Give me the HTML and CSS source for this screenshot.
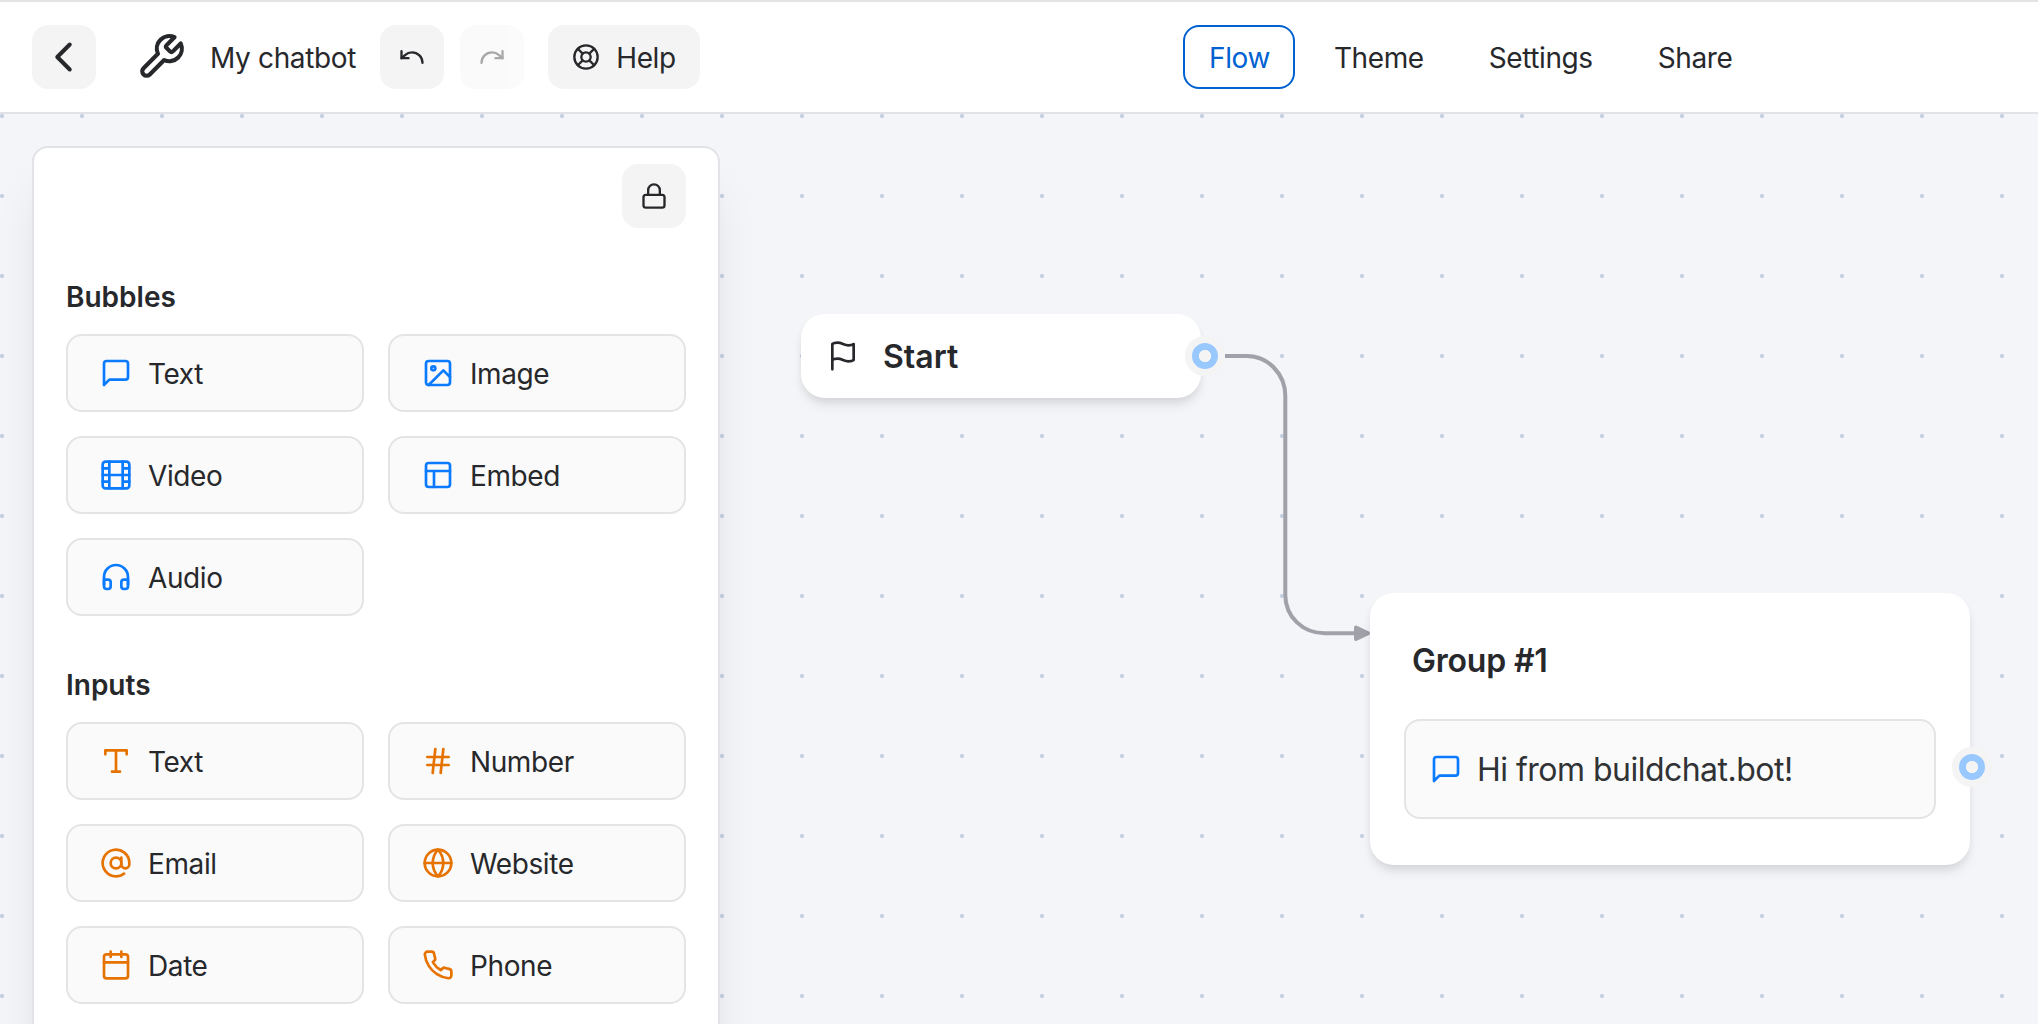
FILE: index.html
```html
<!DOCTYPE html>
<html lang="en">
<head>
<meta charset="utf-8">
<title>My chatbot</title>
<link rel="stylesheet" href="styles.css">
</head>
<body>
<div class="editor">
  <header class="topbar">
    <div class="topbar-left">
      <button class="btn btn-square" aria-label="Back"><svg class="icon icon-back" viewBox="0 0 24 24"><path d="M15 18.500l-6.500-6.500 6.500-6.500"/></svg></button>
      <div class="title">
        <svg class="icon icon-wrench" viewBox="0 0 24 24"><path d="M14.7 6.3a1 1 0 0 0 0 1.4l1.6 1.6a1 1 0 0 0 1.4 0l3.77-3.77a6 6 0 0 1-7.94 7.94l-6.91 6.91a2.12 2.12 0 0 1-3-3l6.91-6.91a6 6 0 0 1 7.94-7.94l-3.76 3.76z"/></svg>
        <span class="title-text">My chatbot</span>
      </div>
      <div class="history">
        <button class="btn btn-square" aria-label="Undo"><svg class="icon icon-sm" viewBox="0 0 24 24"><path d="M3 7v6h6"/><path d="M21 17a9 9 0 0 0-9-9 9 9 0 0 0-6 2.3L3 13"/></svg></button>
        <button class="btn btn-square btn-disabled" aria-label="Redo"><svg class="icon icon-sm" viewBox="0 0 24 24"><path d="M21 7v6h-6"/><path d="M3 17a9 9 0 0 1 9-9 9 9 0 0 1 6 2.3l3 2.7"/></svg></button>
      </div>
      <button class="btn btn-help"><svg class="icon icon-sm" viewBox="0 0 24 24"><circle cx="12" cy="12" r="10"/><circle cx="12" cy="12" r="4"/><path d="M4.93 4.93l4.24 4.24M14.83 14.83l4.24 4.24M14.83 9.17l4.24-4.24M4.93 19.07l4.24-4.24"/></svg><span class="label">Help</span></button>
    </div>
    <nav class="tabs">
      <a class="tab tab-active">Flow</a>
      <a class="tab">Theme</a>
      <a class="tab">Settings</a>
      <a class="tab">Share</a>
    </nav>
  </header>
  <main class="canvas">
    <aside class="panel">
      <div class="panel-top">
        <button class="btn btn-square" aria-label="Lock"><svg class="icon icon-sm" viewBox="0 0 24 24"><rect x="3" y="11" width="18" height="11" rx="2"/><path d="M7 11V7a5 5 0 0 1 10 0v4"/></svg></button>
      </div>
      <section class="group-list bubbles">
        <h2 class="heading">Bubbles</h2>
        <div class="cards">
          <div class="card"><svg class="icon" viewBox="0 0 24 24"><path d="M21 15a2 2 0 0 1-2 2H7l-4 4V5a2 2 0 0 1 2-2h14a2 2 0 0 1 2 2z"/></svg><span class="label">Text</span></div>
          <div class="card"><svg class="icon" viewBox="0 0 24 24"><rect x="3" y="3" width="18" height="18" rx="2"/><circle cx="8.5" cy="8.5" r="1.5"/><path d="M21 15l-5-5L5 21"/></svg><span class="label">Image</span></div>
          <div class="card"><svg class="icon" viewBox="0 0 24 24"><rect x="2" y="2" width="20" height="20" rx="2.18"/><path d="M7 2v20M17 2v20M2 12h20M2 7h5M2 17h5M17 17h5M17 7h5"/></svg><span class="label">Video</span></div>
          <div class="card"><svg class="icon" viewBox="0 0 24 24"><rect x="3" y="3" width="18" height="18" rx="2"/><path d="M3 9h18M9 21V9"/></svg><span class="label">Embed</span></div>
          <div class="card"><svg class="icon" viewBox="0 0 24 24"><path d="M3 18v-6a9 9 0 0 1 18 0v6"/><path d="M21 19a2 2 0 0 1-2 2h-1a2 2 0 0 1-2-2v-3a2 2 0 0 1 2-2h3zM3 19a2 2 0 0 0 2 2h1a2 2 0 0 0 2-2v-3a2 2 0 0 0-2-2H3z"/></svg><span class="label">Audio</span></div>
        </div>
      </section>
      <section class="group-list inputs">
        <h2 class="heading">Inputs</h2>
        <div class="cards">
          <div class="card"><svg class="icon" viewBox="0 0 24 24"><path d="M4 7V4h16v3M9 20h6M12 4v16"/></svg><span class="label">Text</span></div>
          <div class="card"><svg class="icon" viewBox="0 0 24 24"><path d="M4 9h16M4 15h16M10 3L8 21M16 3l-2 18"/></svg><span class="label">Number</span></div>
          <div class="card"><svg class="icon" viewBox="0 0 24 24"><circle cx="12" cy="12" r="4"/><path d="M16 8v5a3 3 0 0 0 6 0v-1a10 10 0 1 0-3.92 7.94"/></svg><span class="label">Email</span></div>
          <div class="card"><svg class="icon" viewBox="0 0 24 24"><circle cx="12" cy="12" r="10"/><path d="M2 12h20"/><path d="M12 2a15.3 15.3 0 0 1 4 10 15.3 15.3 0 0 1-4 10 15.3 15.3 0 0 1-4-10 15.3 15.3 0 0 1 4-10z"/></svg><span class="label">Website</span></div>
          <div class="card"><svg class="icon" viewBox="0 0 24 24"><rect x="3" y="4" width="18" height="18" rx="2"/><path d="M16 2v4M8 2v4M3 10h18"/></svg><span class="label">Date</span></div>
          <div class="card"><svg class="icon" viewBox="0 0 24 24"><path d="M22 16.92v3a2 2 0 0 1-2.18 2 19.79 19.79 0 0 1-8.63-3.07 19.5 19.5 0 0 1-6-6 19.79 19.79 0 0 1-3.07-8.67A2 2 0 0 1 4.11 2h3a2 2 0 0 1 2 1.72 12.84 12.84 0 0 0 .7 2.81 2 2 0 0 1-.45 2.11L8.09 9.91a16 16 0 0 0 6 6l1.27-1.27a2 2 0 0 1 2.11-.45 12.84 12.84 0 0 0 2.81.7A2 2 0 0 1 22 16.92z"/></svg><span class="label">Phone</span></div>
        </div>
      </section>
    </aside>

    <svg class="edges" viewBox="0 0 2038 910">
      <path class="edge" d="M1225 242H1247C1268 242 1285.300 260 1285.300 282V481C1285.300 503 1303 519.300 1325 519.300H1356"/>
      <path class="edge-arrow" d="M1356 513.500L1368 519.300L1356 525Z"/>
    </svg>

    <div class="node node-start">
      <svg class="icon" viewBox="0 0 24 24"><path d="M4 15s1-1 4-1 5 2 8 2 4-1 4-1V3s-1 1-4 1-5-2-8-2-4 1-4 1zM4 22v-7"/></svg>
      <span class="node-title">Start</span>
      <span class="endpoint endpoint-start"></span>
    </div>

    <div class="node node-group">
      <span class="node-title">Group #1</span>
      <div class="message">
        <svg class="icon" viewBox="0 0 24 24"><path d="M21 15a2 2 0 0 1-2 2H7l-4 4V5a2 2 0 0 1 2-2h14a2 2 0 0 1 2 2z"/></svg>
        <span class="message-text">Hi from buildchat.bot!</span>
      </div>
      <span class="endpoint endpoint-group"></span>
    </div>
  </main>
</div>
</body>
</html>
```
FILE: styles.css
```css
* { box-sizing: border-box; }

body {
  margin: 0;
  font-family: Inter, "Liberation Sans", sans-serif;
  font-size: 28px;
  line-height: 42px;
  color: #27282b;
}

.editor {
  display: flex;
  flex-direction: column;
  height: 1024px;
  overflow: hidden;
}

.icon {
  width: 32px;
  height: 32px;
  flex: none;
  fill: none;
  stroke: currentColor;
  stroke-width: 2;
  stroke-linecap: round;
  stroke-linejoin: round;
}
.icon-sm { width: 28px; height: 28px; }
.icon-back { width: 46px; height: 46px; stroke-width: 2.1; }
.icon-wrench { width: 50px; height: 50px; }

.label { padding-top: 1px; letter-spacing: -.4px; }

/* Top bar */
.topbar {
  display: flex;
  flex: none;
  align-items: center;
  height: 114px;
  padding-left: 32px;
  background: #fff;
  border-top: 2px solid #e4e4e4;
  border-bottom: 2px solid #e2e3e6;
}
.topbar-left {
  display: flex;
  align-items: center;
  width: 1151px;
}
.btn {
  display: flex;
  align-items: center;
  justify-content: center;
  height: 64px;
  padding: 0;
  border: 0;
  border-radius: 16px;
  background: #f4f4f4;
  color: inherit;
  font: inherit;
}
.btn-square { width: 64px; }
.btn-disabled { opacity: .4; }
.title {
  display: flex;
  align-items: center;
  gap: 24px;
  width: 284px;
  padding-left: 40px;
}
.title-text {
  padding-top: 1px;
  letter-spacing: -.35px;
  white-space: nowrap;
}
.history { display: flex; gap: 16px; }
.btn-help {
  width: 152px;
  margin-left: 24px;
  gap: 16px;
}
.tabs { display: flex; gap: 13px; }
.tab {
  height: 64px;
  padding: 10px 24px 8px;
  border: 2px solid transparent;
  border-radius: 16px;
  letter-spacing: -.4px;
}
.tab-active { padding-right: 23px; color: #0061d1; border-color: #0061d1; }

/* Canvas */
.canvas {
  position: relative;
  flex: 1;
  min-height: 0;
  padding: 32px;
  background: #f4f5f8 radial-gradient(circle, #c6d0e3 2px, transparent 2.200px) -38px -38px / 80px 80px;
}

/* Block panel */
.panel {
  position: relative;
  width: 688px;
  height: 1000px;
  padding: 16px 32px;
  background: #fff;
  border: 2px solid #e2e3e6;
  border-radius: 16px;
  box-shadow: 0 40px 50px -10px rgba(0, 0, 0, .1), 0 20px 20px -10px rgba(0, 0, 0, .04);
}
.panel-top { display: flex; justify-content: flex-end; }
.bubbles { padding-top: 48px; }
.inputs { padding-top: 48px; }
.heading {
  margin: 0 0 16px;
  font-size: 28px;
  font-weight: 600;
  line-height: 42px;
}
.cards {
  display: grid;
  grid-template-columns: 298px 298px;
  gap: 24px;
}
.card {
  display: flex;
  align-items: center;
  gap: 16px;
  height: 78px;
  padding: 0 32px;
  background: #fafafa;
  border: 2px solid #e4e4e7;
  border-radius: 16px;
}
.bubbles .icon, .message .icon { color: #0a7aff; }
.inputs .icon { color: #e67200; }

/* Flow graph */
.edges {
  position: absolute;
  left: 0;
  top: 0;
  width: 2038px;
  height: 910px;
}
.edge { fill: none; stroke: #a1a1aa; stroke-width: 4; }
.edge-arrow { fill: #a1a1aa; stroke: #a1a1aa; stroke-width: 4; stroke-linejoin: round; }
.node {
  position: absolute;
  background: #fff;
  border-radius: 24px;
  box-shadow: 0 8px 12px -2px rgba(0, 0, 0, .1), 0 4px 8px -2px rgba(0, 0, 0, .06);
}
.node-title {
  padding-top: 2px;
  font-size: 32px;
  font-weight: 600;
  line-height: 48px;
}
.node-start {
  left: 801px;
  top: 200px;
  display: flex;
  align-items: center;
  gap: 24px;
  width: 400px;
  height: 84px;
  padding-left: 26px;
}
.node-group {
  left: 1370px;
  top: 479px;
  display: flex;
  flex-direction: column;
  gap: 34px;
  width: 600px;
  height: 272px;
  padding: 42px 34px;
}
.node-group .node-title { padding-left: 8px; letter-spacing: -.2px; }
.message {
  display: flex;
  align-items: center;
  gap: 15px;
  height: 100px;
  padding: 0 24px;
  background: #fafafa;
  border: 2px solid #e4e4e7;
  border-radius: 16px;
  font-size: 32px;
  color: #303235;
}
.message-text { padding-top: 2px; letter-spacing: -.52px; }
.endpoint {
  position: absolute;
  width: 40px;
  height: 40px;
  border: 7px solid #f4f4f5;
  border-radius: 50%;
  background: radial-gradient(circle, #f4f4f5 5.700px, #99c8ff 6.500px);
}
.endpoint-start { left: 384px; top: 22px; }
.endpoint-group { left: 582px; top: 154px; }
```
